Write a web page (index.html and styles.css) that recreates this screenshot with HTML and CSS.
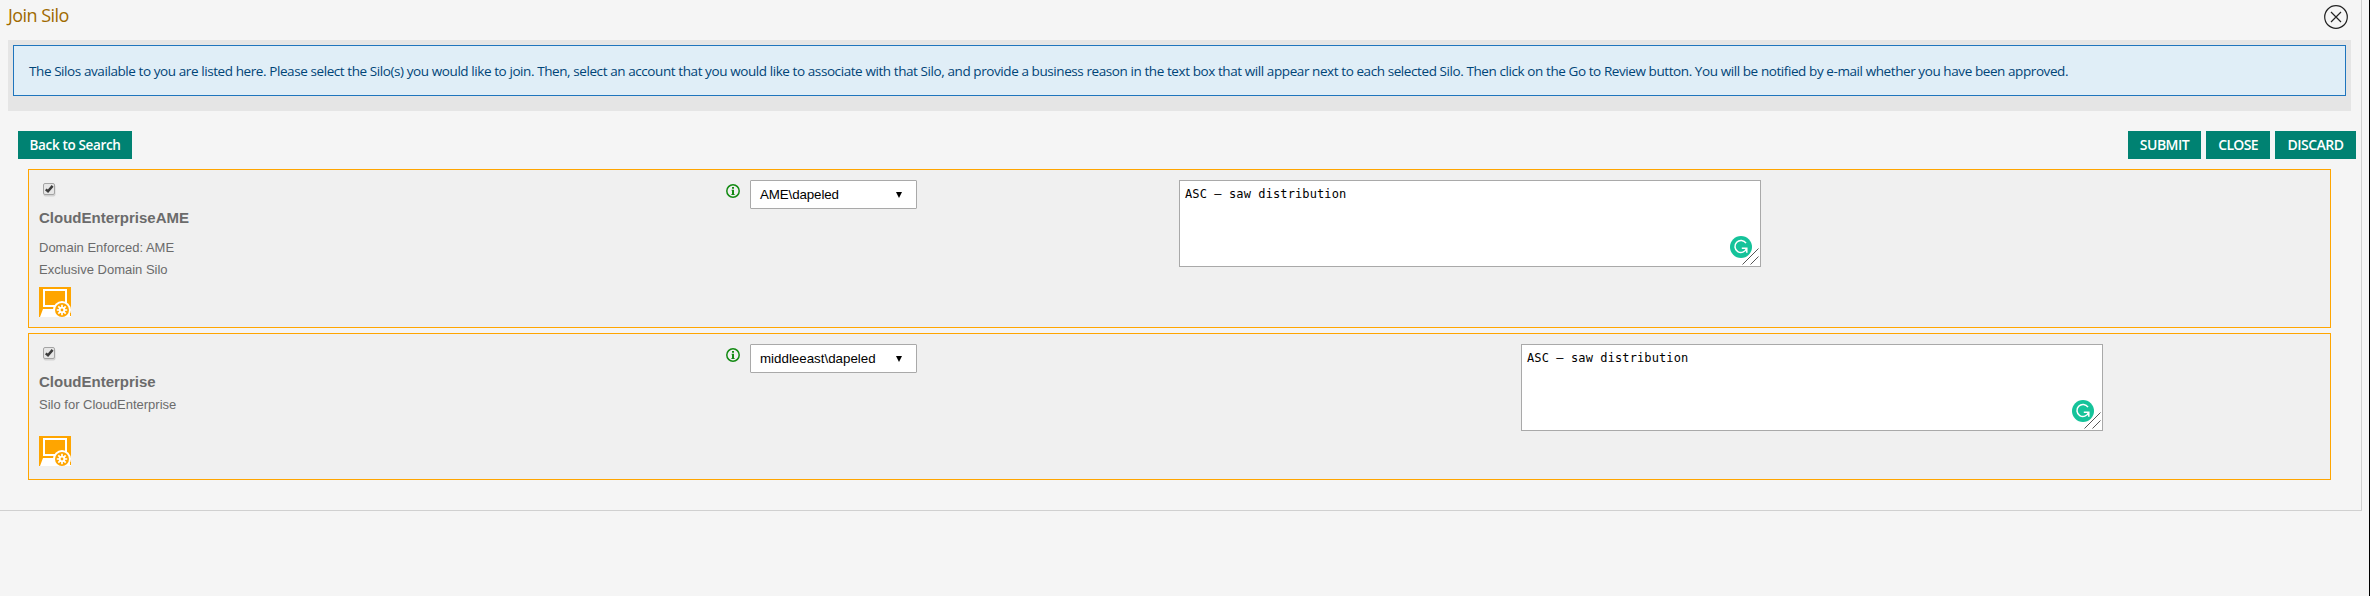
FILE: index.html
```html
<!DOCTYPE html>
<html lang="en">
<head>
<meta charset="utf-8">
<title>Join Silo</title>
<link rel="stylesheet" href="styles.css">
</head>
<body>
<svg class="defs" width="0" height="0" aria-hidden="true">
  <symbol id="check" viewBox="0 0 13 14">
    <rect x=".5" y="1.5" width="12" height="12" rx="2" fill="#d2d2d2"/>
    <rect x=".5" y=".5" width="11" height="11" rx="1.5" fill="#e6e6e6" stroke="#a4a4a4"/>
    <path d="M2.8 6.3 5 8.3 9.6 2.9" fill="none" stroke="#3c3c3c" stroke-width="2.5"/>
  </symbol>
  <symbol id="info" viewBox="0 0 14 14">
    <circle cx="7" cy="7" r="6.2" fill="none" stroke="#128a12" stroke-width="1.5"/>
    <path d="M6 3h2v1.7H6zM5.6 5.7H8v4.2h.6v1H5.4v-1H6V6.7h-.4z" fill="#128a12"/>
  </symbol>
  <symbol id="device" viewBox="0 0 32 30">
    <path d="M0 0h32v30H0z" fill="#ffa500"/>
    <path d="M5 3h22v16H5z" fill="none" stroke="#fff" stroke-width="2"/>
    <path d="M1 30 4 22h20l8 6v2z" fill="#fff"/>
    <circle cx="23" cy="23" r="9" fill="#fff"/>
    <path d="M31 26h1v3h-1z" fill="#ffa500"/>
    <circle cx="23" cy="23" r="7" fill="#ffa500"/>
    <path d="M23 17.8v10.4M17.8 23h10.4M19.3 19.3l7.4 7.4M26.7 19.3l-7.4 7.4" stroke="#fff" stroke-width="1.7"/>
    <circle cx="23" cy="23" r="3.3" fill="#fff"/>
    <circle cx="23" cy="23" r="1.4" fill="#ffa500"/>
  </symbol>
  <symbol id="grammar" viewBox="0 0 22 22">
    <circle cx="11" cy="11" r="11" fill="#15c39a"/>
    <path d="M16 7.2A6 6 0 1 0 16.6 12.5M11.8 12.3h5v4.4" fill="none" stroke="#fff" stroke-width="1.5"/>
  </symbol>
  <symbol id="grip" viewBox="0 0 17 17">
    <path d="M.5 16.5l16-16M8.5 16.5l8-8" stroke="#555" fill="none"/>
  </symbol>
</svg>
<div class="panel">
  <header class="header">
    <h1 class="title">Join Silo</h1>
    <svg class="dismiss" viewBox="0 0 24 24"><circle cx="12" cy="12" r="11.3" fill="none" stroke="#222" stroke-width="1.2"/><path d="M7 7l10 10M17 7 7 17" stroke="#222" stroke-width="1.2"/></svg>
  </header>
  <div class="notice-wrap">
    <p class="notice">The Silos available to you are listed here. Please select the Silo(s) you would like to join. Then, select an account that you would like to associate with that Silo, and provide a business reason in the text box that will appear next to each selected Silo. Then click on the Go to Review button. You will be notified by e-mail whether you have been approved.</p>
  </div>
  <div class="toolbar">
    <button class="btn btn-back">Back to Search</button>
    <button class="btn btn-submit">SUBMIT</button>
    <button class="btn btn-close">CLOSE</button>
    <button class="btn btn-discard">DISCARD</button>
  </div>
  <div class="cards">
    <section class="card card-ame">
      <div class="silo">
        <svg class="check"><use href="#check"/></svg>
        <h2 class="name name-ame">CloudEnterpriseAME</h2>
        <p class="line line-domain">Domain Enforced: AME</p>
        <p class="line line-exclusive">Exclusive Domain Silo</p>
        <svg class="device"><use href="#device"/></svg>
      </div>
      <svg class="info"><use href="#info"/></svg>
      <div class="select"><span class="account-ame">AME\dapeled</span><i class="arrow"></i></div>
      <div class="reason"><span>ASC – saw distribution</span><svg class="grammar"><use href="#grammar"/></svg><svg class="grip"><use href="#grip"/></svg></div>
    </section>
    <section class="card card-ent">
      <div class="silo">
        <svg class="check"><use href="#check"/></svg>
        <h2 class="name name-ent">CloudEnterprise</h2>
        <p class="line line-silo">Silo for CloudEnterprise</p>
        <svg class="device"><use href="#device"/></svg>
      </div>
      <svg class="info"><use href="#info"/></svg>
      <div class="select"><span class="account-me">middleeast\dapeled</span><i class="arrow"></i></div>
      <div class="reason"><span>ASC – saw distribution</span><svg class="grammar"><use href="#grammar"/></svg><svg class="grip"><use href="#grip"/></svg></div>
    </section>
  </div>
</div>
</body>
</html>
```
FILE: styles.css
```css
* { box-sizing: border-box; margin: 0; padding: 0; }
body {
  height: 596px;
  overflow: hidden;
  background: #f5f5f5;
  border-right: 1px solid #000;
  font-family: "Open Sans", sans-serif;
}
svg { display: block; flex: none; }
.defs { position: absolute; }
.panel {
  width: 2362px;
  height: 511px;
  border-right: 1px solid #d0d0d0;
  border-bottom: 1px solid #d0d0d0;
}
.header {
  display: flex;
  justify-content: space-between;
  height: 40px;
  padding: 5px 13px 0 8px;
}
.title {
  font-size: 18px;
  line-height: 20px;
  font-weight: 400;
  letter-spacing: -0.55px;
  color: #a06a00;
  white-space: nowrap;
}
.dismiss { width: 24px; height: 24px; }
.notice-wrap {
  width: 2343px;
  height: 71px;
  margin-left: 8px;
  padding: 5px;
  background: #e5e5e5;
}
.notice {
  height: 51px;
  padding-left: 15px;
  border: 1px solid #1f75bd;
  background: #e0eef7;
  color: #004578;
  font-size: 13.5px;
  line-height: 50px;
  letter-spacing: -0.416px;
  white-space: nowrap;
}
.toolbar {
  display: flex;
  gap: 5px;
  margin: 20px 5px 0 18px;
}
.btn {
  height: 28px;
  border: 0;
  background: #008272;
  color: #fff;
  font: 600 14px/28px "Open Sans", sans-serif;
  letter-spacing: -0.5px;
  white-space: nowrap;
}
.btn-back { width: 114px; margin-right: auto; font-size: 13.5px; letter-spacing: -0.35px; }
.btn-submit { width: 73px; }
.btn-close { width: 64px; letter-spacing: -0.7px; }
.btn-discard { width: 81px; }
.cards {
  display: flex;
  flex-direction: column;
  gap: 5px;
  width: 2303px;
  margin: 10px 0 0 28px;
}
.card {
  display: flex;
  align-items: flex-start;
  padding: 10px 0 0 10px;
  border: 1px solid #ffa500;
  background: #f0f0f0;
  font-family: "Liberation Sans", Arial, sans-serif;
}
.card-ame { height: 159px; }
.card-ent { height: 147px; }
.silo { width: 687px; padding-top: 3px; color: #6b6b6b; }
.check { width: 13px; height: 14px; margin-left: 4px; }
.name { margin-top: 12px; font-size: 15px; line-height: 18px; white-space: nowrap; }
.line { font-size: 13px; line-height: 16px; white-space: nowrap; }
.line-domain { margin-top: 13px; }
.line-exclusive { margin-top: 6px; }
.line-silo { margin-top: 6px; }
.device { width: 32px; height: 30px; margin-top: 9px; }
.card-ent .device { margin-top: 23px; }
.info { width: 14px; height: 14px; margin: 4px 10px 0 0; }
.select {
  display: flex;
  align-items: center;
  justify-content: space-between;
  width: 167px;
  height: 29px;
  padding: 0 14px 0 9px;
  border: 1px solid #a9a9a9;
  border-radius: 1px;
  background: #fff;
  color: #000;
  font-size: 13.33px;
}
.account-ame { letter-spacing: -0.1px; }
.arrow {
  border: 3px solid transparent;
  border-top: 6px solid #000;
  border-bottom: 0;
}
.reason {
  position: relative;
  width: 582px;
  height: 87px;
  margin-left: 262px;
  padding: 5px 5px;
  border: 1px solid #a9a9a9;
  background: #fff;
  color: #000;
  font: 12px/16px "DejaVu Sans Mono", monospace;
  letter-spacing: 0.107px;
}
.card-ent .reason { margin-left: 604px; }
.grammar { position: absolute; right: 8px; bottom: 8px; width: 22px; height: 22px; }
.grip { position: absolute; right: 1px; bottom: 1px; width: 17px; height: 17px; }
```
